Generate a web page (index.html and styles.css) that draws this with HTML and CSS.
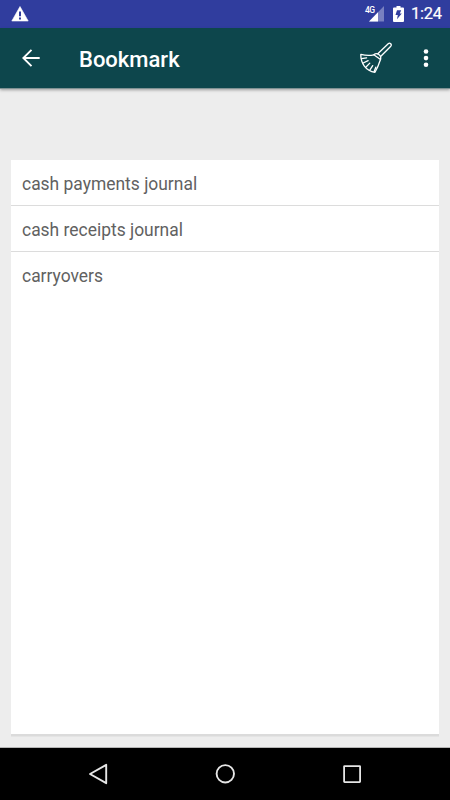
FILE: index.html
```html
<!DOCTYPE html>
<html lang="en">
<head>
  <meta charset="UTF-8" />
  <meta name="viewport" content="width=device-width, initial-scale=1.0" />
  <title>Bookmark</title>
  <link rel="stylesheet" href="styles.css">
</head>
<body>
  <div class="statusbar">
    <svg class="warning" width="18" height="16" viewBox="0 0 18 16">
      <path d="M9 .5L17.2 15H.8z" fill="#fff" stroke="#fff" stroke-width=".6" stroke-linejoin="round"/>
      <path d="M8 5.5h2v4.7H8zM8 11.5h2v2H8z" fill="#303d9e"/>
    </svg>
    <div class="signal">
      <span class="network">4G</span>
      <svg width="15" height="16" viewBox="0 0 15 16">
        <path d="M15 0v15.5H0z" fill="#fff" opacity=".35"/>
        <path d="M9 6.2v9.3H0z" fill="#fff"/>
      </svg>
    </div>
    <svg class="battery" width="11" height="16" viewBox="0 0 11 16">
      <path d="M3.5 0h4v1.6H10q1 0 1 1V15q0 1-1 1H1q-1 0-1-1V2.600q0-1 1-1h2.500z" fill="#fff"/>
      <path d="M4 4.200h4.200L6.800 7.500h2L4 13.300l.8-4.200H2.500z" fill="#303d9e"/>
    </svg>
    <span class="clock">1:24</span>
  </div>

  <div class="toolbar">
    <svg class="back" width="18" height="18" viewBox="0 0 18 18" fill="none" stroke="#fff" stroke-width="1.900">
      <path d="M17.700 9H1.500M9.500 .8L1.300 9l8.200 8.200"/>
    </svg>
    <h1 class="title">Bookmark</h1>
    <svg class="broom" width="34" height="32" viewBox="0 0 34 32" fill="none" stroke="#fff" stroke-width="1.300" stroke-linecap="round" stroke-linejoin="round">
      <path d="M17.800 11.800L28.200 1.700q1.300-1.100 2.500 0 1.100 1.200.1 2.500L20.600 14.500"/>
      <path d="M13.800 12.800q2.300-1.900 4.700-.5 3.100 2.200 2 5.200z"/>
      <path d="M13.800 12.800Q8 14.300 .8 12.300C.6 21 5.700 29 15 30.300Q18 25 20.500 17.500"/>
      <path d="M1.500 16.600l5.100-.8M3.200 21l4.900-2.400M6 25l3.800-3.900M9.800 28.200l2.900-4.600M14.100 29.700l1.700-4.500"/>
    </svg>
    <svg class="more" width="6" height="20" viewBox="0 0 6 20" fill="#fff">
      <circle cx="3" cy="3.500" r="2.300"/>
      <circle cx="3" cy="10.100" r="2.300"/>
      <circle cx="3" cy="16.700" r="2.300"/>
    </svg>
  </div>

  <div class="content">
    <ul class="list">
      <li>cash payments journal</li>
      <li>cash receipts journal</li>
      <li>carryovers</li>
    </ul>
  </div>

  <div class="navbar">
    <svg width="20" height="22" viewBox="0 0 20 22" fill="none" stroke="#e6e6e6" stroke-width="1.900" stroke-linejoin="round">
      <path d="M18.200 1.800v18.400L2 11z"/>
    </svg>
    <svg width="20" height="20" viewBox="0 0 20 20" fill="none" stroke="#e6e6e6" stroke-width="1.900">
      <circle cx="10.300" cy="9.800" r="8.700"/>
    </svg>
    <svg width="20" height="20" viewBox="0 0 20 20" fill="none" stroke="#e6e6e6" stroke-width="1.800">
      <rect x="2.100" y="2.100" width="16" height="16" rx=".5"/>
    </svg>
  </div>
</body>
</html>
```

FILE: styles.css
```css
* { box-sizing: border-box; }
body { margin: 0; height: 100vh; display: flex; flex-direction: column; background: #ededed; font-family: Roboto, sans-serif; }
svg { display: block; flex: none; }

.statusbar { height: 28px; flex: none; display: flex; align-items: center; padding: 0 9px 0 11px; background: #303d9e; color: #fff; }
.signal { display: flex; align-items: flex-start; margin-left: auto; }
.network { width: 10px; margin-right: -6px; font-size: 8.500px; line-height: 9px; font-weight: 500; letter-spacing: -.5px; }
.battery { margin: 0 7px 0 9px; }
.clock { width: 30px; font-size: 16.500px; line-height: 30px; letter-spacing: -.3px; white-space: nowrap; -webkit-text-stroke: .2px #fff; }

.toolbar { height: 60px; flex: none; display: flex; align-items: center; padding: 0 21px 0 22px; background: #0d464c; color: #fff; box-shadow: 0 1px 0 #7f9294, 0 2px 3px rgba(0,0,0,0.35); }
.title { margin: 3px 0 0 39px; font-size: 22px; font-weight: 500; line-height: 29px; }
.broom { margin-left: auto; margin-right: 29px; }

.content { flex: 1; display: flex; padding: 72px 11px 14px; }
.list { flex: 1; margin: 0; padding: 0; list-style: none; background: #fff; box-shadow: 0 2px 0 #dbdbdb, 0 3px 0 #e4e4e4; }
.list li { height: 46px; padding: 1px 11px 0; border-bottom: 1px solid #dcdcdc; color: #616161; font-size: 17.450px; line-height: 46px; }
.list li:last-child { border-bottom: none; }

.navbar { height: 52px; flex: none; display: flex; align-items: center; justify-content: space-between; padding: 0 88px; background: #000; box-shadow: 0 -1px 0 #b5b5b5; }
```
